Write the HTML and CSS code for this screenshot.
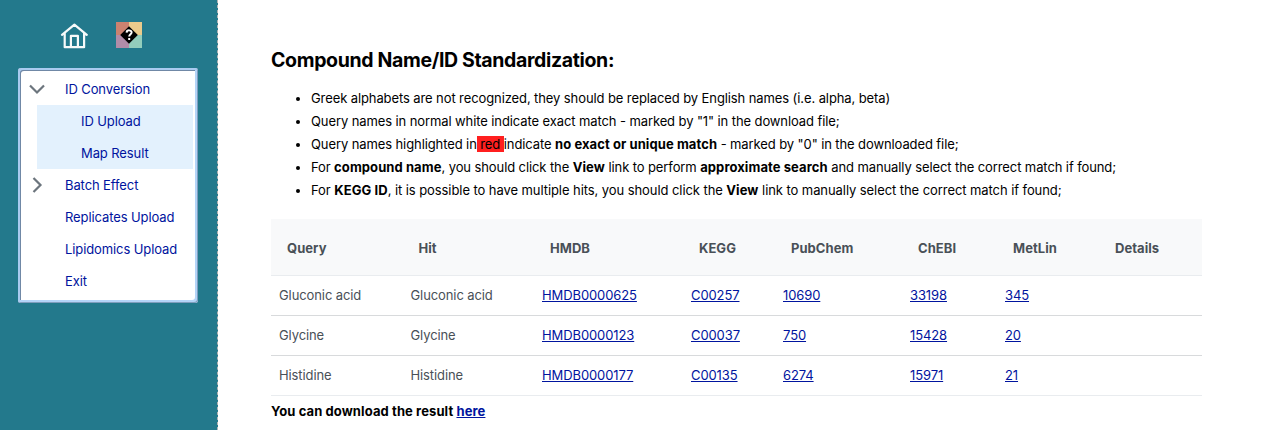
FILE: index.html
```html
<!DOCTYPE html>
<html lang="en">
<head>
<meta charset="utf-8">
<title>Compound Name/ID Standardization</title>
<link rel="stylesheet" href="styles.css">
</head>
<body>
<div class="layout">
  <aside class="sidebar">
    <div class="toolbar">
      <svg class="home-icon" width="28" height="26" viewBox="0 0 28 26" fill="none" stroke="#f7fafa" stroke-width="2.2" stroke-linecap="round" stroke-linejoin="round"><path d="M2 11.8 14.4 1.7l12.4 10.1M4.7 10v14.2h19.4V10M10.9 24V12.8h7V24"/></svg>
      <svg class="help-icon" width="26" height="26" viewBox="0 0 26 26"><path fill="#cb8270" d="M0 0h13v13H0z"/><path fill="#eacb8c" d="M13 0h13v13H13z"/><path fill="#b18ca8" d="M0 13h13v13H0z"/><path fill="#93cdbc" d="M13 13h13v13H13z"/><path fill="#000" d="m13 4.2 8.8 8.8-8.8 8.8L4.2 13z"/><path d="M10.6 10.6c.2-3.1 5.2-2.8 5-.1-.1 1.8-2.4 1.8-2.4 4.1M13.2 16.1v1.8" fill="none" stroke="#fff" stroke-width="2"/></svg>
    </div>
    <nav class="tree">
      <a class="node"><svg class="chevron" width="16" height="16" viewBox="0 0 16 16"><path d="m1 4.5 7 7 7-7"/></svg>ID Conversion</a>
      <div class="children">
        <a class="node child">ID Upload</a>
        <a class="node child">Map Result</a>
      </div>
      <a class="node"><svg class="chevron" width="16" height="16" viewBox="0 0 16 16"><path d="m4.5 1 7 7-7 7"/></svg>Batch Effect</a>
      <a class="node leaf">Replicates Upload</a>
      <a class="node leaf">Lipidomics Upload</a>
      <a class="node leaf">Exit</a>
    </nav>
  </aside>
  <main class="content">
    <h1 class="title">Compound Name/ID Standardization:</h1>
    <ul class="notes">
      <li>Greek alphabets are not recognized, they should be replaced by English names (i.e. alpha, beta)</li>
      <li>Query names in normal white indicate exact match - marked by "1" in the download file;</li>
      <li>Query names highlighted in<span class="flag">&nbsp;red&nbsp;</span>indicate <b>no exact or unique match</b> - marked by "0" in the downloaded file;</li>
      <li>For <b>compound name</b>, you should click the <b>View</b> link to perform <b>approximate search</b> and manually select the correct match if found;</li>
      <li class="wide">For <b>KEGG ID</b>, it is possible to have multiple hits, you should click the <b>View</b> link to manually select the correct match if found;</li>
    </ul>
    <table class="results">
      <colgroup><col class="c-name"><col class="c-name"><col class="c-hmdb"><col class="c-kegg"><col class="c-pub"><col class="c-chebi"><col class="c-met"><col class="c-det"></colgroup>
      <thead><tr><th>Query</th><th>Hit</th><th>HMDB</th><th>KEGG</th><th>PubChem</th><th>ChEBI</th><th>MetLin</th><th>Details</th></tr></thead>
      <tbody>
        <tr><td>Gluconic acid</td><td>Gluconic acid</td><td><a class="link">HMDB0000625</a></td><td><a class="link">C00257</a></td><td><a class="link">10690</a></td><td><a class="link">33198</a></td><td><a class="link">345</a></td><td></td></tr>
        <tr><td>Glycine</td><td>Glycine</td><td><a class="link">HMDB0000123</a></td><td><a class="link">C00037</a></td><td><a class="link">750</a></td><td><a class="link">15428</a></td><td><a class="link">20</a></td><td></td></tr>
        <tr><td>Histidine</td><td>Histidine</td><td><a class="link">HMDB0000177</a></td><td><a class="link">C00135</a></td><td><a class="link">6274</a></td><td><a class="link">15971</a></td><td><a class="link">21</a></td><td></td></tr>
      </tbody>
    </table>
    <p class="download">You can download the result <a class="link">here</a></p>
  </main>
</div>
</body>
</html>
```
FILE: styles.css
```css
* { box-sizing: border-box; }
body {
  margin: 0;
  font: 13px/16px Inter, "Liberation Sans", sans-serif;
  letter-spacing: -0.1px;
  color: #000;
  background: #fff;
  overflow: hidden;
}
b { letter-spacing: 0.08px; }
.layout { display: flex; height: 430px; }
.sidebar {
  width: 218px;
  flex: none;
  padding: 22px 20px 0 18px;
  background: #23798c;
  border-right: 1px dashed #b4b4b4;
}
.toolbar { display: flex; gap: 28px; height: 46px; padding-left: 42px; }
.home-icon { margin-top: 1px; }
.tree {
  width: 180px;
  height: 235px;
  padding: 5px 5px 0 19px;
  background: #fff;
  box-shadow:
    inset -1px -1px #7f9dbd,
    inset 2px 2px #a9cbf0,
    inset -3px -3px #b4d4f7,
    inset 3px 3px #7088a6;
  border-radius: 3px;
}
.node {
  display: flex;
  align-items: center;
  height: 32px;
  color: #00149e;
  white-space: nowrap;
}
.chevron {
  margin: 0 20px 0 -8px;
  fill: none;
  stroke: #6c757d;
  stroke-width: 2.2;
}
.leaf { padding-left: 28px; }
.children { background: #e3f1fd; }
.child { padding-left: 44px; }
.content { padding: 48px 0 0 53px; }
.title { margin: 0; font-size: 19.5px; line-height: 24px; font-weight: 700; letter-spacing: -0.35px; }
.notes { margin: 15px 0 17px; padding-left: 40px; line-height: 23px; white-space: nowrap; }
.wide { letter-spacing: -0.075px; }
.flag { background: #ff1f1f; }
.results { width: 931px; table-layout: fixed; border-collapse: separate; border-spacing: 0; color: #495057; }
.c-name { width: 131.5px; }
.c-hmdb { width: 149px; }
.c-kegg { width: 92px; }
.c-pub { width: 127px; }
.c-chebi { width: 95px; }
.c-met { width: 102px; }
.c-det { width: 103px; }
.results th {
  height: 57px;
  padding: 2px 16px 0;
  text-align: left;
  font-weight: 700;
  letter-spacing: 0.05px;
  background: #f8f9fa;
  border-bottom: 1px solid #e9ecef;
}
.results td { height: 40px; padding: 0 8px 1px; border-bottom: 1px solid #d8dadc; }
.results tr:last-child td { border-bottom-color: #e9ecef; }
.link { color: #00149e; text-decoration: underline; }
.download { margin: 7px 0 0; font-weight: 700; letter-spacing: 0.1px; }
```
